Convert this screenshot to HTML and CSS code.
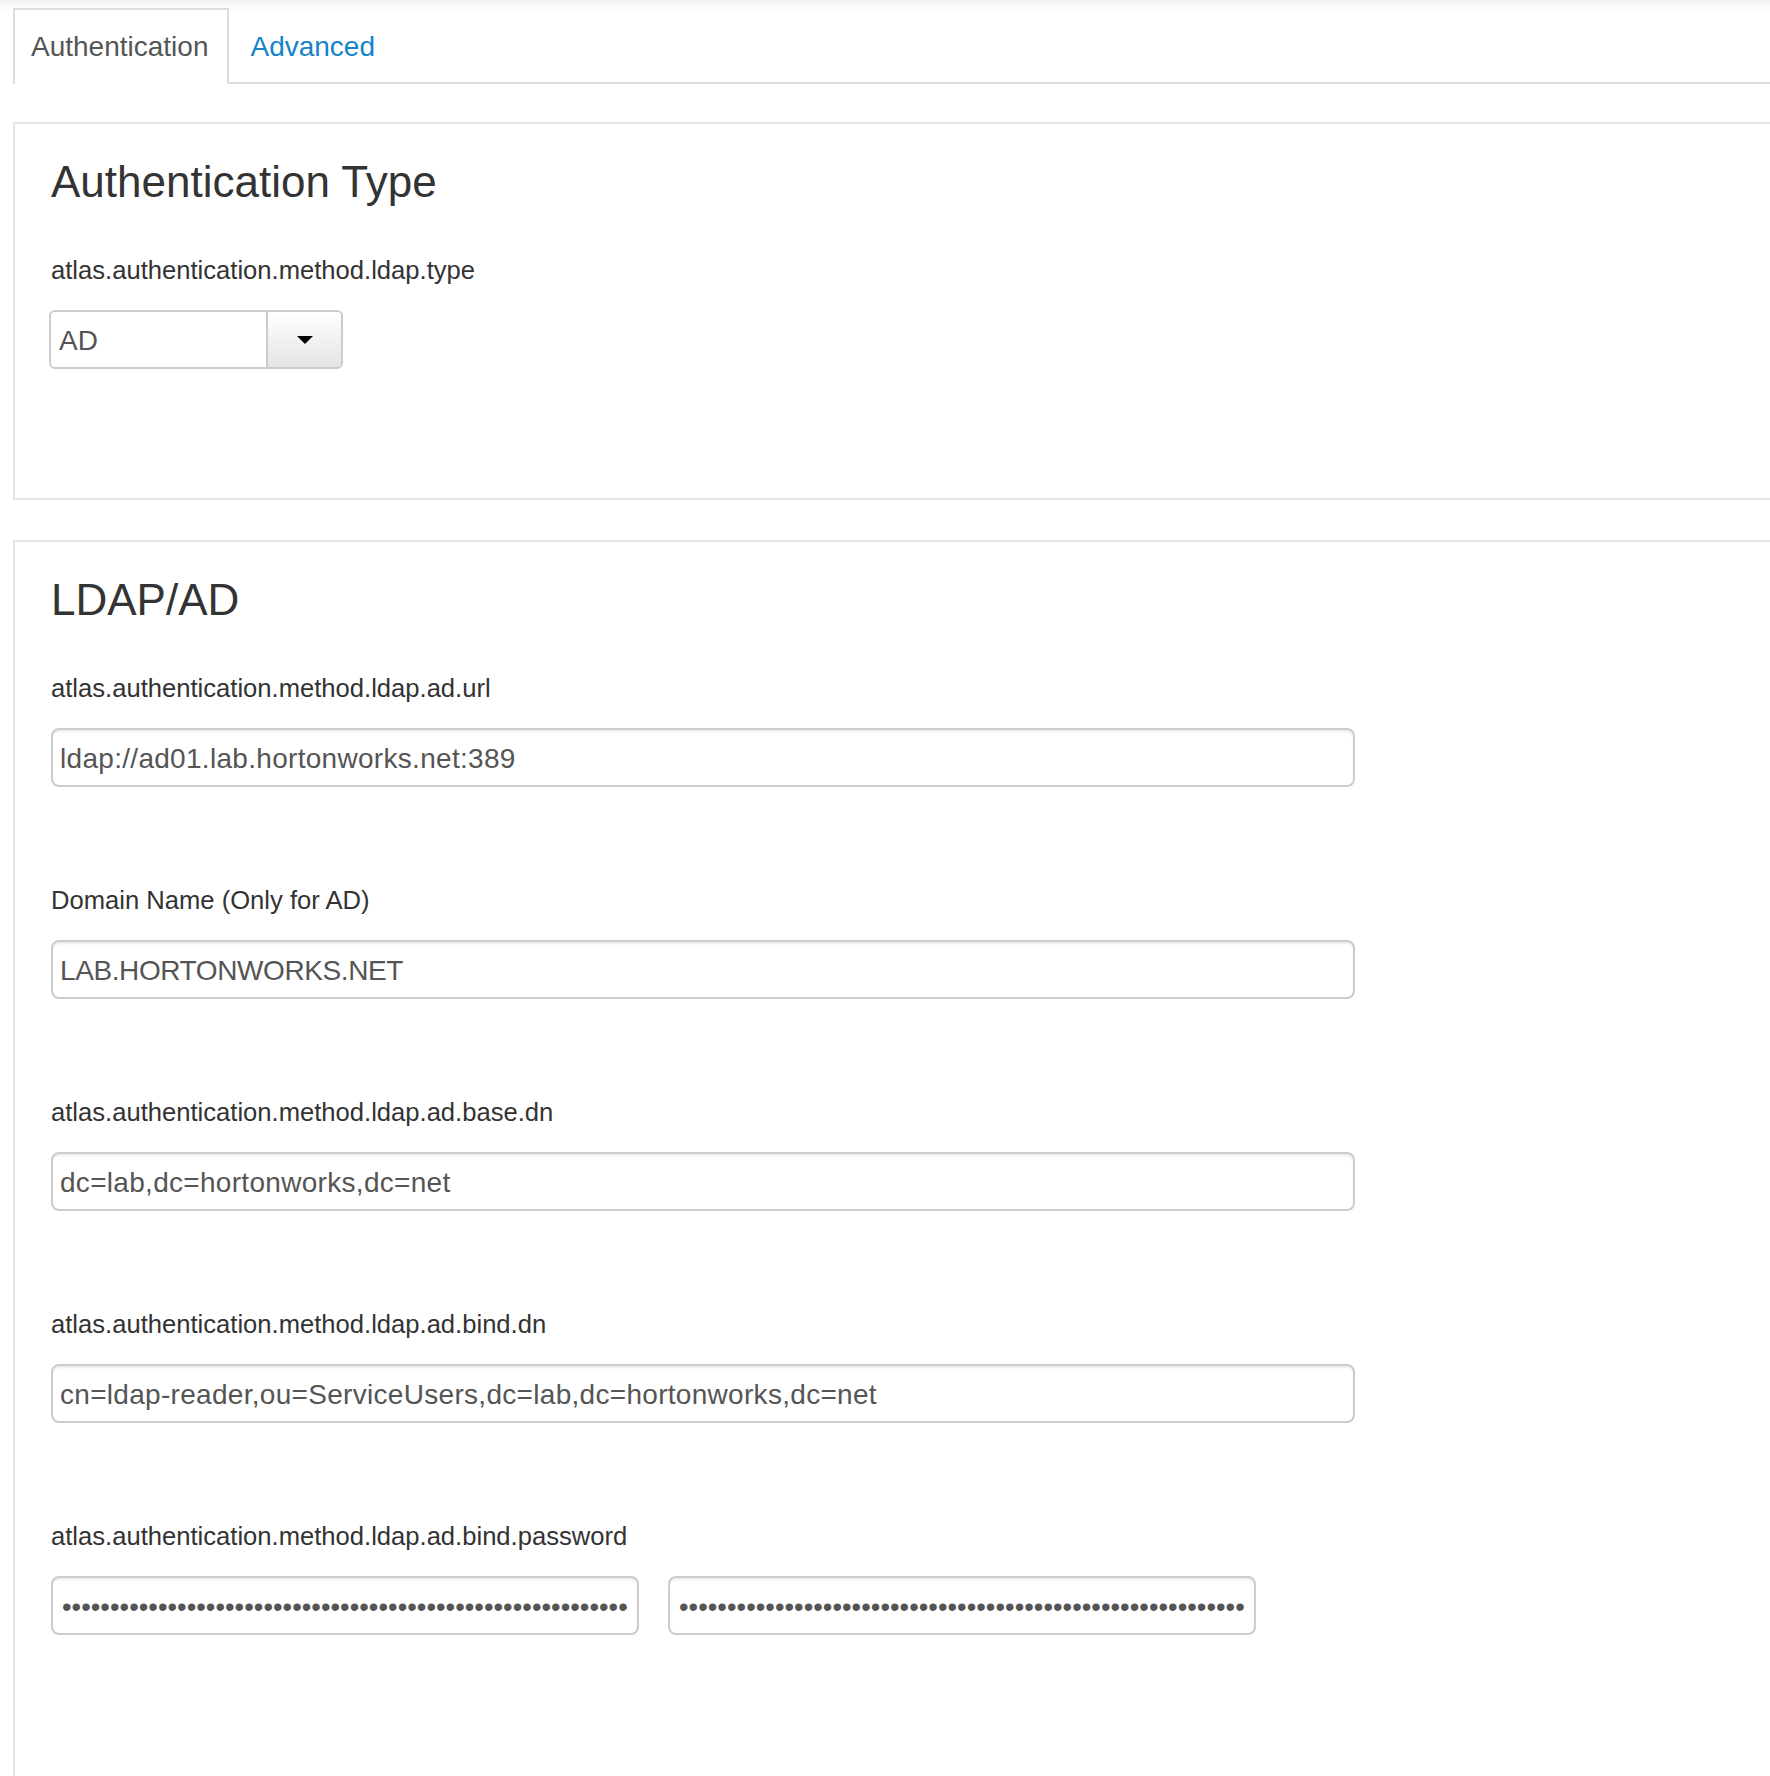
FILE: index.html
```html
<!DOCTYPE html>
<html>
<head>
<meta charset="utf-8">
<title>Atlas LDAP/AD</title>
<link rel="stylesheet" href="styles.css">
</head>
<body>
<ul class="tabs">
  <li class="tab tab-active"><a>Authentication</a></li>
  <li class="tab"><a>Advanced</a></li>
</ul>

<section class="panel panel-type">
  <h2 class="panel-title">Authentication Type</h2>
  <div class="form-group">
    <label class="field-label">atlas.authentication.method.ldap.type</label>
    <div class="combo">
      <span class="combo-value">AD</span>
      <span class="combo-btn"><span class="caret"></span></span>
    </div>
  </div>
</section>

<section class="panel panel-ldap">
  <h2 class="panel-title">LDAP/AD</h2>
  <div class="form-group">
    <label class="field-label">atlas.authentication.method.ldap.ad.url</label>
    <input class="field-input" type="text" value="ldap://ad01.lab.hortonworks.net:389" readonly>
  </div>
  <div class="form-group">
    <label class="field-label">Domain Name (Only for AD)</label>
    <input class="field-input field-upper" type="text" value="LAB.HORTONWORKS.NET" readonly>
  </div>
  <div class="form-group">
    <label class="field-label">atlas.authentication.method.ldap.ad.base.dn</label>
    <input class="field-input" type="text" value="dc=lab,dc=hortonworks,dc=net" readonly>
  </div>
  <div class="form-group">
    <label class="field-label">atlas.authentication.method.ldap.ad.bind.dn</label>
    <input class="field-input" type="text" value="cn=ldap-reader,ou=ServiceUsers,dc=lab,dc=hortonworks,dc=net" readonly>
  </div>
  <div class="form-group">
    <label class="field-label">atlas.authentication.method.ldap.ad.bind.password</label>
    <div class="password-row">
      <input class="field-input field-password" type="password" value="xxxxxxxxxxxxxxxxxxxxxxxxxxxxxxxxxxxxxxxxxxxxxxxxxxxxxxxxxxx" readonly>
      <input class="field-input field-password" type="password" value="xxxxxxxxxxxxxxxxxxxxxxxxxxxxxxxxxxxxxxxxxxxxxxxxxxxxxxxxxxx" readonly>
    </div>
  </div>
</section>
</body>
</html>
```

FILE: styles.css
```css
html, body {
  margin: 0;
  padding: 0;
  overflow: hidden;
}

html {
  background: #fff;
}

body {
  font-family: "Liberation Sans", Arial, Helvetica, sans-serif;
  color: #333;
  min-height: 1776px;
  background: linear-gradient(to bottom, #f1f1f1 0, #fafafa 7px, #fff 14px) no-repeat;
}

/* Tabs */
.tabs {
  list-style: none;
  margin: 8px 0 0 13px;
  padding: 0;
  display: flex;
  gap: 3px;
  border-bottom: 2px solid #ddd;
}

.tab a {
  display: block;
  font-size: 28px;
  line-height: 40px;
  padding: 17.3px 19px 16.7px 16px;
  border: 2px solid transparent;
  border-bottom: 0;
  margin-bottom: -2px;
  color: #1783c9;
  cursor: pointer;
}

.tab-active a {
  color: #555;
  background: #fff;
  border-color: #ddd;
}

/* Panels */
.panel {
  margin: 38px 0 0 13px;
  border: 2px solid #e4e4e4;
  border-right: 0;
  padding: 33.7px 0 0 36px;
}

.panel-type {
  padding-bottom: 128.5px;
}

.panel-ldap {
  margin-top: 40px;
  padding-bottom: 200px;
}

.panel-title {
  margin: 0 0 46.4px;
  font-size: 44px;
  line-height: 48px;
  font-weight: normal;
  color: #333;
}

.form-group + .form-group {
  margin-top: 94.6px;
}

.field-label {
  display: block;
  font-size: 25.6px;
  line-height: 36px;
  font-weight: normal;
  color: #333;
  margin-bottom: 22.4px;
}

/* Combo (select) */
.combo {
  display: flex;
  box-sizing: border-box;
  width: 294px;
  height: 59px;
  margin-left: -2px;
  border: 2px solid #ccc;
  border-radius: 6px;
  background: #fff;
  overflow: hidden;
}

.combo-value {
  flex: 1;
  font-size: 28px;
  line-height: 54px;
  padding: 2px 0 0 8px;
  color: #555;
}

.combo-btn {
  width: 73px;
  display: flex;
  align-items: center;
  justify-content: center;
  border-left: 2px solid #ccc;
  background: linear-gradient(to bottom, #fff 0, #e4e4e4 100%);
}

.caret {
  width: 0;
  height: 0;
  border-top: 8px solid #000;
  border-left: 8px solid transparent;
  border-right: 8px solid transparent;
}

/* Inputs */
.field-input {
  display: block;
  box-sizing: border-box;
  width: 1304px;
  height: 59px;
  margin: 0;
  padding: 3px 7px 0;
  border: 2px solid #ccc;
  border-radius: 8px;
  font-family: "Liberation Sans", Arial, Helvetica, sans-serif;
  font-size: 28px;
  letter-spacing: 0.3px;
  color: #555;
  background: #fff;
  box-shadow: inset 0 2px 2px rgba(0, 0, 0, 0.075);
  outline: none;
}

.field-upper {
  letter-spacing: -0.4px;
}

.password-row {
  display: flex;
  gap: 29px;
}

.field-password {
  width: 588px;
  padding-left: 9px;
  font-size: 27.4px;
  letter-spacing: 0;
}
```
